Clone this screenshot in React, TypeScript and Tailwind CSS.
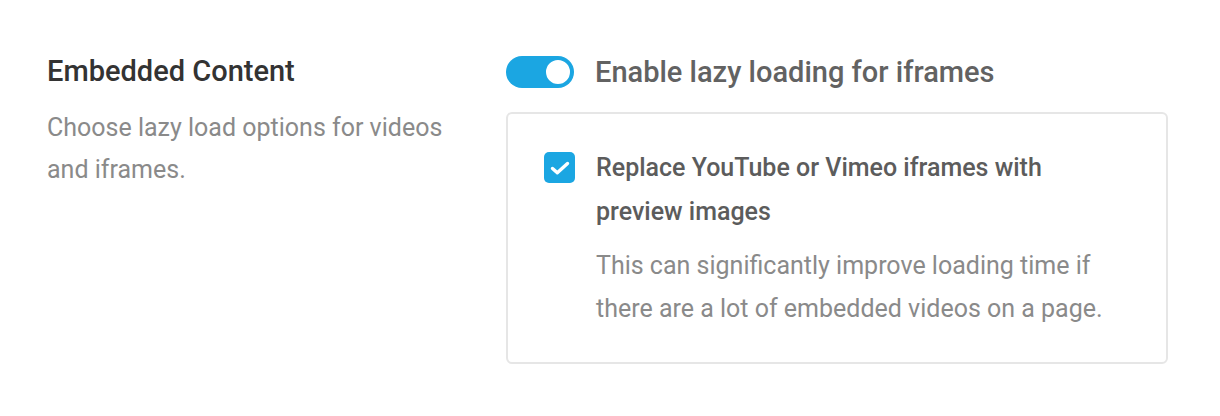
export default function App() {
  return (
    <div className="min-h-[416px] bg-white font-['Roboto',sans-serif]">
      <div className="flex pl-[47px] pt-[52px] pr-[52px]">
        {/* left: section heading */}
        <div className="w-[459px] shrink-0">
          <h2 className="text-[29px] font-medium leading-[38px] text-[#333333]">Embedded Content</h2>
          <p className="mt-[17px] w-[410px] text-[25px] leading-[42px] text-[#8a8a8a]">
            Choose lazy load options for videos and iframes.
          </p>
        </div>

        {/* right: options */}
        <div className="flex-1">
          <div className="flex items-center gap-[21px] pt-[3px]">
            <button className="relative h-[32px] w-[68px] rounded-full bg-[#1ba6e2]">
              <span className="absolute right-[2px] top-[2px] h-[28px] w-[28px] rounded-full border-[2px] border-[#1ba6e2] bg-white" />
            </button>
            <span className="text-[29px] font-medium leading-[34px] text-[#626262]">
              Enable lazy loading for iframes
            </span>
          </div>

          <div className="mt-[23px] rounded-[6px] border-[2px] border-[#e6e6e6] px-[36px] pb-[32px] pt-[32px]">
            <div className="flex gap-[21px]">
              <span className="mt-[6px] flex h-[31px] w-[31px] shrink-0 items-center justify-center rounded-[5px] bg-[#1ba6e2]">
                <svg viewBox="0 0 24 24" className="h-[24px] w-[24px]" fill="none" stroke="white" strokeWidth="3.4" strokeLinecap="round" strokeLinejoin="round">
                  <path d="M4.5 12.5l4.8 4.3L19.5 7.5" />
                </svg>
              </span>
              <div>
                <p className="text-[25px] font-medium leading-[44px] text-[#5c5c5c]">
                  Replace YouTube or Vimeo iframes with
                  <br />
                  preview images
                </p>
                <p className="mt-[10px] text-[25px] leading-[43px] text-[#8a8a8a]">
                  This can significantly improve loading time if
                  <br />
                  there are a lot of embedded videos on a page.
                </p>
              </div>
            </div>
          </div>
        </div>
      </div>
    </div>
  );
}
